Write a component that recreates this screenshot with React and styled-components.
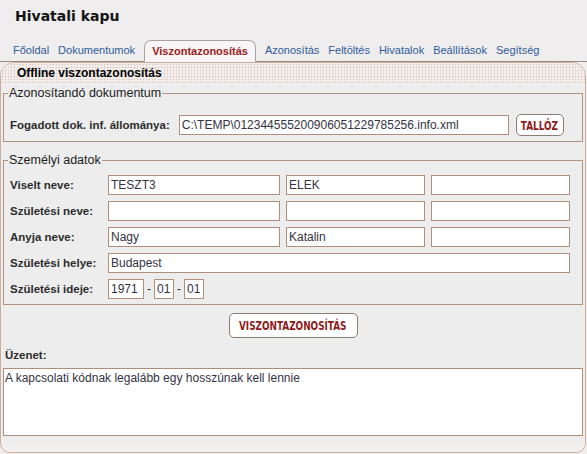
import React from 'react';
import styled, { createGlobalStyle } from 'styled-components';

const GlobalStyle = createGlobalStyle`
  html, body {
    margin: 0;
    padding: 0;
    background: #efeded;
    font-family: "Liberation Sans", Arial, sans-serif;
  }
`;

const Page = styled.div`
  width: 587px;
  height: 454px;
  overflow: hidden;
  background: #efeded;
`;

const Title = styled.h1`
  margin: 0;
  padding: 8px 15px 0;
  height: 32px;
  box-sizing: border-box;
  font-family: "DejaVu Sans", Verdana, sans-serif;
  font-size: 14px;
  line-height: 17px;
  font-weight: bold;
  color: #141414;
`;

const TabBar = styled.nav`
  display: flex;
  align-items: flex-end;
  gap: 9px;
  height: 30px;
  box-sizing: border-box;
  padding-left: 13px;
  border-bottom: 1px solid #9c8b82;
`;

const Tab = styled.span`
  height: 21px;
  line-height: 21px;
  font-size: 11px;
  color: ${p => (p.$active ? '#9b1c1c' : '#2e5c9c')};
  font-weight: ${p => (p.$active ? 'bold' : 'normal')};
  white-space: nowrap;
  ${p =>
    p.$active &&
    `
    padding: 0 7px;
    margin-bottom: -1px;
    background: #f7f5f5;
    border: 1px solid #aaa4a1;
    border-bottom: none;
    border-radius: 7px 7px 0 0;
  `}
`;

const Panel = styled.section`
  margin-right: 1px;
  border: 1px solid #c8ae9f;
  border-radius: 14px 14px 10px 10px;
  background: #ededed;
  overflow: hidden;
  height: 389px;
  display: flex;
  flex-direction: column;
`;

const PanelHeader = styled.div`
  height: 21px;
  padding-left: 16px;
  line-height: 21px;
  font-size: 12px;
  font-weight: bold;
  color: #000;
  background-color: #f4f0ef;
  background-image: radial-gradient(#dccbc2 0.8px, transparent 1.1px);
  background-size: 3px 3px;
  border-bottom: 1px solid #f6f3f2;
`;

const PanelBody = styled.div`
  flex: 1;
  padding: 0 2px;
  background: linear-gradient(to bottom, #ededed 0, #ededed 352px, #f4f0ef 100%);
`;

const Fieldset = styled.fieldset`
  margin: ${p => p.$top}px 0 0;
  padding: 0 6px ${p => p.$bottom}px;
  border: 1px solid #b3937f;
  min-width: 0;
`;

const Legend = styled.legend`
  margin-left: -2px;
  padding: 0 1px;
  font-size: 12.5px;
  line-height: 15px;
  color: #1c1c1c;
`;

const FileRow = styled.div`
  display: flex;
  align-items: center;
  gap: 9px;
  margin-top: 13px;
  height: 22px;
`;

const Label = styled.label`
  font-size: 11.5px;
  font-weight: bold;
  color: #2c2c2c;
  white-space: nowrap;
  flex: none;
`;

const Input = styled.input`
  box-sizing: border-box;
  height: 20px;
  width: ${p => (p.$width ? `${p.$width}px` : '100%')};
  margin: 0;
  padding: 0 2px;
  border: 1px solid #b08e7a;
  background: #fff;
  font-family: "Liberation Sans", Arial, sans-serif;
  font-size: 12px;
  color: #333344;
  outline: none;
  grid-column: ${p => p.$span || 'auto'};
`;

const Button = styled.button`
  box-sizing: border-box;
  flex: none;
  display: flex;
  align-items: center;
  justify-content: center;
  height: ${p => p.$h}px;
  width: ${p => p.$w}px;
  padding: 0;
  background: #fff;
  border: 1px solid #8f7d73;
  border-radius: 5px;
  cursor: pointer;
`;

const ButtonText = styled.span`
  display: inline-block;
  white-space: nowrap;
  font-family: "DejaVu Sans Condensed", "DejaVu Sans", sans-serif;
  font-weight: bold;
  font-size: 13px;
  color: #8e1b1b;
  transform: scaleX(0.76);
`;

const PersonRows = styled.div`
  display: flex;
  flex-direction: column;
  gap: 6px;
  margin-top: 7px;
`;

const PersonRow = styled.div`
  display: grid;
  grid-template-columns: 92px 172px 139px 139px;
  column-gap: 6px;
  align-items: center;
`;

const DateGroup = styled.div`
  display: flex;
  align-items: center;
  grid-column: 2 / span 3;
`;

const Dash = styled.span`
  width: 10px;
  text-align: center;
  font-size: 12px;
  color: #333;
`;

const Center = styled.div`
  display: flex;
  justify-content: center;
  margin-top: 8px;
`;

const MessageLabel = styled.div`
  margin: 10px 0 0 2px;
  font-size: 11.5px;
  font-weight: bold;
  color: #2c2c2c;
  line-height: 14px;
`;

const Message = styled.div`
  box-sizing: border-box;
  margin-top: 6px;
  height: 68px;
  padding: 2px 1px;
  border: 1px solid #b08e7a;
  background: #fff;
  font-size: 12px;
  line-height: 14px;
  color: #333344;
`;

const tabs = ['Főoldal', 'Dokumentumok', 'Viszontazonosítás', 'Azonosítás', 'Feltöltés', 'Hivatalok', 'Beállítások', 'Segítség'];

const people = [
  { label: 'Viselt neve:', values: ['TESZT3', 'ELEK', ''] },
  { label: 'Születési neve:', values: ['', '', ''] },
  { label: 'Anyja neve:', values: ['Nagy', 'Katalin', ''] },
];

export default function App() {
  return (
    <Page>
      <GlobalStyle />
      <Title>Hivatali kapu</Title>
      <TabBar>
        {tabs.map(t => (
          <Tab key={t} $active={t === 'Viszontazonosítás'}>{t}</Tab>
        ))}
      </TabBar>
      <Panel>
        <PanelHeader>Offline viszontazonosítás</PanelHeader>
        <PanelBody>
          <Fieldset $top={1} $bottom={5}>
            <Legend>Azonosítandó dokumentum</Legend>
            <FileRow>
              <Label>Fogadott dok. inf. állománya:</Label>
              <Input $width={330} readOnly value="C:\TEMP\012344555200906051229785256.info.xml" />
              <Button $w={48} $h={22} style={{ marginLeft: -2 }}>
                <ButtonText>TALLÓZ</ButtonText>
              </Button>
            </FileRow>
          </Fieldset>

          <Fieldset $top={11} $bottom={5}>
            <Legend>Személyi adatok</Legend>
            <PersonRows>
              {people.map(p => (
                <PersonRow key={p.label}>
                  <Label>{p.label}</Label>
                  {p.values.map((v, i) => (
                    <Input key={i} readOnly value={v} />
                  ))}
                </PersonRow>
              ))}
              <PersonRow>
                <Label>Születési helye:</Label>
                <Input $span="2 / span 3" readOnly value="Budapest" />
              </PersonRow>
              <PersonRow>
                <Label>Születési ideje:</Label>
                <DateGroup>
                  <Input $width={36} readOnly value="1971" />
                  <Dash>-</Dash>
                  <Input $width={20} readOnly value="01" />
                  <Dash>-</Dash>
                  <Input $width={20} readOnly value="01" />
                </DateGroup>
              </PersonRow>
            </PersonRows>
          </Fieldset>

          <Center>
            <Button $w={129} $h={25}>
              <ButtonText>VISZONTAZONOSÍTÁS</ButtonText>
            </Button>
          </Center>

          <MessageLabel>Üzenet:</MessageLabel>
          <Message>A kapcsolati kódnak legalább egy hosszúnak kell lennie</Message>
        </PanelBody>
      </Panel>
    </Page>
  );
}
